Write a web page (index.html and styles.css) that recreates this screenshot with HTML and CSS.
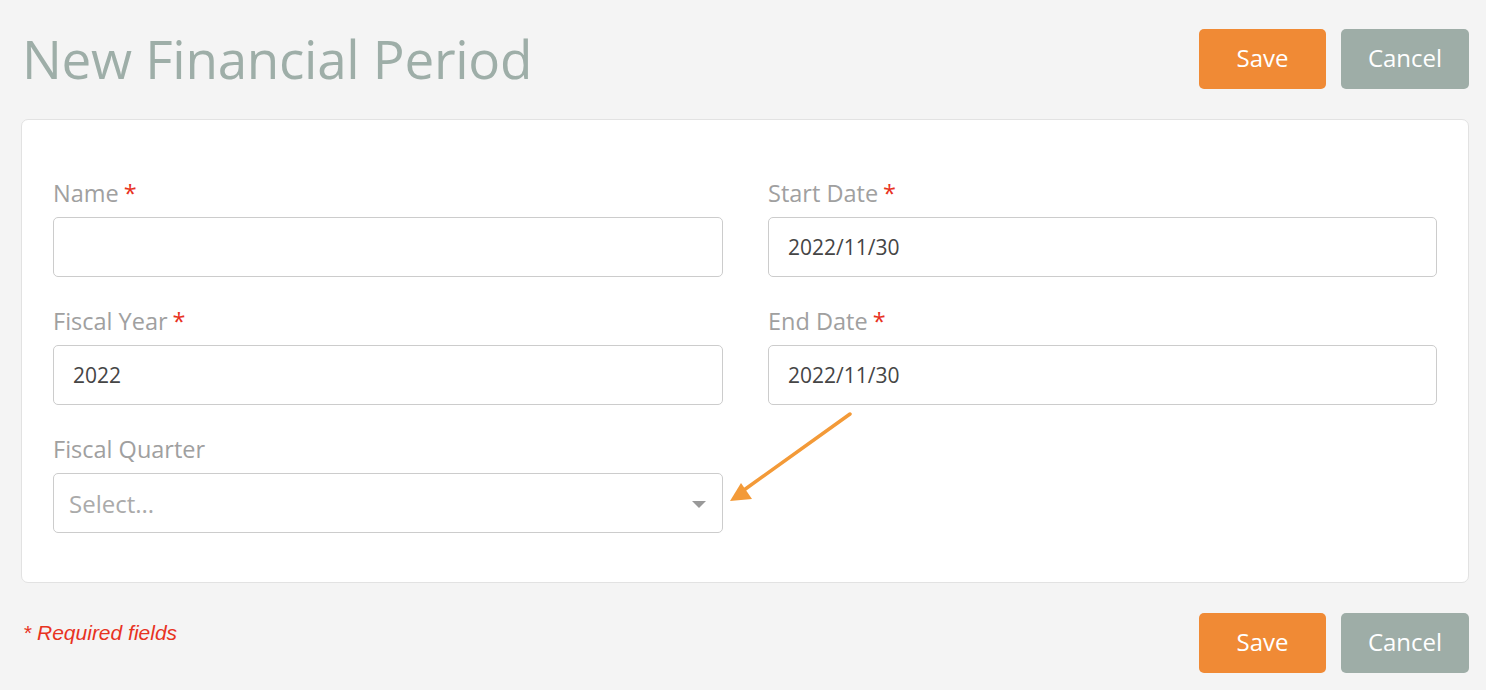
FILE: index.html
```html
<!DOCTYPE html>
<html>
<head>
<meta charset="utf-8">
<title>New Financial Period</title>
<link rel="stylesheet" href="styles.css">
</head>
<body>
<div class="page">
  <header class="header">
    <h1 class="title">New Financial Period</h1>
    <div class="actions">
      <button class="btn btn-save">Save</button>
      <button class="btn btn-cancel">Cancel</button>
    </div>
  </header>

  <section class="card">
    <div class="grid">
      <div class="field">
        <label class="label">Name<span class="req">*</span></label>
        <div class="input"></div>
      </div>
      <div class="field">
        <label class="label">Start Date<span class="req">*</span></label>
        <div class="input">2022/11/30</div>
      </div>
      <div class="field">
        <label class="label">Fiscal Year<span class="req">*</span></label>
        <div class="input">2022</div>
      </div>
      <div class="field">
        <label class="label">End Date<span class="req">*</span></label>
        <div class="input">2022/11/30</div>
      </div>
      <div class="field">
        <label class="label">Fiscal Quarter</label>
        <div class="input select"><span class="placeholder">Select...</span><span class="caret"></span></div>
      </div>
    </div>
    <svg class="annotation" width="140" height="100" viewBox="0 0 140 100">
      <line x1="130" y1="3" x2="24" y2="79" stroke="#f39a38" stroke-width="3.5" stroke-linecap="round"/>
      <polygon points="10,90 21,72 32,88" fill="#f39a38"/>
    </svg>
  </section>

  <footer class="footer">
    <p class="required">* Required fields</p>
    <div class="actions">
      <button class="btn btn-save">Save</button>
      <button class="btn btn-cancel">Cancel</button>
    </div>
  </footer>
</div>
</body>
</html>
```

FILE: styles.css
```css
* { box-sizing: border-box; }

html, body {
  margin: 0;
  padding: 0;
  background: #f4f4f4;
  font-family: "Open Sans", "Noto Sans", sans-serif;
}

.page {
  padding: 29px 17px 0 21px;
}

.header {
  display: flex;
  justify-content: space-between;
  align-items: flex-start;
  height: 90px;
}

.title {
  margin: 0;
  padding-left: 1px;
  font-size: 53px;
  font-weight: 400;
  line-height: 60px;
  color: #9eaea8;
  letter-spacing: -0.3px;
}

.actions {
  display: flex;
  gap: 15px;
}

.btn {
  height: 60px;
  border: none;
  border-radius: 5px;
  font-family: "Open Sans", "Noto Sans", sans-serif;
  font-size: 24px;
  color: #ffffff;
  padding: 0 0 3px 0;
}

.btn-save {
  width: 127px;
  background: #f08a35;
}

.btn-cancel {
  width: 128px;
  background: #9eada7;
}

.card {
  position: relative;
  background: #ffffff;
  border: 1px solid #e2e2e2;
  border-radius: 7px;
  padding: 57px 31px 49px 31px;
}

.grid {
  display: grid;
  grid-template-columns: 670px 669px;
  column-gap: 45px;
  row-gap: 28px;
}

.field {
  display: flex;
  flex-direction: column;
}

.label {
  font-size: 23.5px;
  line-height: 32px;
  color: #a0a0a0;
  margin-bottom: 8px;
}

.req {
  color: #e8331f;
  margin-left: 5px;
}

.input {
  height: 60px;
  border: 1px solid #cccccc;
  border-radius: 5px;
  padding: 0 19px;
  display: flex;
  align-items: center;
  font-size: 21px;
  color: #454545;
}

.select {
  justify-content: space-between;
  padding: 0 16px 0 15px;
}

.placeholder {
  color: #aaaaaa;
  font-size: 24px;
}

.caret {
  width: 0;
  height: 0;
  border-left: 7px solid transparent;
  border-right: 7px solid transparent;
  border-top: 7px solid #999999;
  margin-top: 2px;
}

.annotation {
  position: absolute;
  left: 698px;
  top: 291px;
}

.footer {
  display: flex;
  justify-content: space-between;
  align-items: flex-start;
  padding-top: 30px;
}

.required {
  margin: 8px 0 0 2px;
  font-family: "Liberation Sans", Arial, sans-serif;
  font-style: italic;
  font-size: 21px;
  color: #e8331f;
}
```
